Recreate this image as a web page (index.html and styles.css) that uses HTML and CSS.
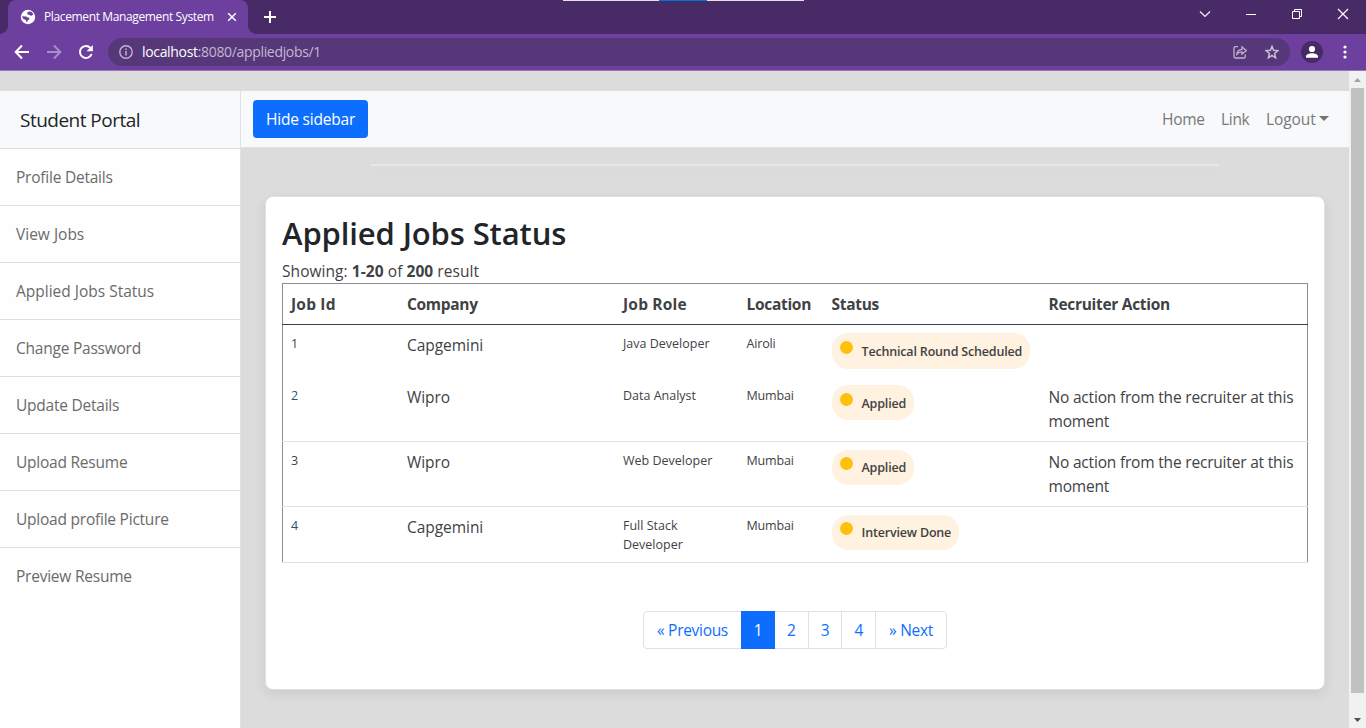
FILE: index.html
```html
<!DOCTYPE html>
<html lang="en">
<head>
<meta charset="utf-8">
<title>Placement Management System</title>
<link rel="stylesheet" href="styles.css">
</head>
<body>
<div class="window">
  <header class="tabstrip">
    <div class="top-marker"><i></i></div>
    <div class="tab-before"></div>
    <div class="tab">
      <svg class="favicon" viewBox="0 0 16 16"><circle cx="8" cy="8" r="7.2" fill="#fff"/><path d="M7.6 3.2c1.400-1.200 3.300-.8 4.400.1l1.400 2.200c-.9.3-1.200 1.300-2.400 1.200-.9 0-1.100-.9-1.900-1-.7-.2-1.300.3-1.500-.4-.2-.7-.7-1.200 0-2.100zM2 7.300l4 .2c.9.1 1 .9 1.800 1.100.8.1 1.700.2 1.600 1.100-.1 1-1.300 1-1.600 1.900-.2.700-.5 1.500-1.300 1.500L5.800 11C4.200 10.600 2.700 10.200 2 7.300z" fill="#6d409f"/></svg>
      <span class="tab-title">Placement Management System</span>
      <svg class="tab-close" viewBox="0 0 10 10"><path d="M1.200 1.200l7.600 7.600M8.800 1.200L1.200 8.800" stroke="#fff" stroke-width="1.500"/></svg>
    </div>
    <div class="tab-after"></div>
    <svg class="new-tab" viewBox="0 0 12 12"><path d="M6 0v12M0 6h12" stroke="#fff" stroke-width="2"/></svg>
    <div class="window-controls">
      <svg width="12" height="12" viewBox="0 0 12 12"><path d="M1 3.500l5 5 5-5" fill="none" stroke="#f4f0f8" stroke-width="1.200"/></svg>
      <svg width="12" height="12" viewBox="0 0 12 12"><path d="M1 6.500h10" stroke="#fff"/></svg>
      <svg width="12" height="12" viewBox="0 0 12 12"><path d="M1.500 3.500h7v7h-7zM3.500 3.500v-2h7v7h-2" fill="none" stroke="#fff"/></svg>
      <svg width="12" height="12" viewBox="0 0 12 12"><path d="M1 1l10 10M11 1L1 11" stroke="#fff" stroke-width="1.200"/></svg>
    </div>
  </header>

  <div class="toolbar">
    <svg class="tool" viewBox="0 0 16 16"><path d="M15 8H2M8 1.500L1.700 8 8 14.500" fill="none" stroke="#fff" stroke-width="2"/></svg>
    <svg class="tool" viewBox="0 0 16 16"><path d="M1 8h13M8 1.500L14.300 8 8 14.500" fill="none" stroke="#aa8dc9" stroke-width="2"/></svg>
    <svg class="tool" viewBox="0 0 16 16"><path d="M13.600 10a6 6 0 1 1-1.200-6.100" fill="none" stroke="#fff" stroke-width="2"/><path d="M14.800 1v6.300H8.500z" fill="#fff"/></svg>
    <div class="omnibox">
      <svg class="info" viewBox="0 0 14 14"><circle cx="7" cy="7" r="6.200" fill="none" stroke="#c3b6d0" stroke-width="1.400"/><path d="M7 6v4.500M7 3.400v1.500" stroke="#c3b6d0" stroke-width="1.500"/></svg>
      <span class="url"><b>localhost</b>:8080/appliedjobs/1</span>
      <svg class="share" viewBox="0 0 14 14"><path d="M5 1.600H2.500Q1 1.600 1 3.100v8.300Q1 13 2.500 13h8.300q1.500 0 1.500-1.600V9.500" fill="none" stroke="#c0b3ce" stroke-width="1.300"/><path d="M3.800 9.300C4.200 6.200 6 4.500 9 4.300V1.800l4.300 3.700L9 9.200V6.900C6.600 6.900 5.200 7.700 3.800 9.300z" fill="none" stroke="#c0b3ce" stroke-width="1.300"/></svg>
      <svg class="star" viewBox="0 0 14 14"><path d="M7 1.400l1.550 3.900 4.400.35-3.350 2.850 1.050 4.300L7 10.500l-3.650 2.300 1.050-4.300-3.350-2.850 4.400-.35z" fill="none" stroke="#c8bdd3" stroke-width="1.500"/></svg>
    </div>
    <svg class="avatar" viewBox="0 0 22 22"><circle cx="11" cy="11" r="11" fill="#472a66"/><circle cx="11" cy="8" r="3.100" fill="#fff"/><path d="M5 16.800v-1.300c0-2 3.500-3.200 6-3.200s6 1.200 6 3.200v1.300z" fill="#fff"/></svg>
    <svg class="dots" viewBox="0 0 4 14"><circle cx="2" cy="2" r="1.600" fill="#fff"/><circle cx="2" cy="7" r="1.600" fill="#fff"/><circle cx="2" cy="12" r="1.600" fill="#fff"/></svg>
  </div>

  <div class="viewport">
    <div class="page">
      <aside class="sidebar">
        <div class="brand">Student Portal</div>
        <nav>
          <a>Profile Details</a><a class="wide">View Jobs</a><a class="wide">Applied Jobs Status</a><a>Change Password</a><a>Update Details</a><a>Upload Resume</a><a>Upload profile Picture</a><a>Preview Resume</a>
        </nav>
      </aside>
      <main>
        <div class="navbar">
          <button class="hide-btn">Hide sidebar</button>
          <span class="nav-home">Home</span><span class="nav-link">Link</span><span class="nav-logout">Logout<i class="caret"></i></span>
        </div>
        <div class="rule"></div>
        <section class="card">
          <h1>Applied Jobs Status</h1>
          <div class="showing">Showing: <b>1-20</b> of <b>200</b> result</div>
          <table>
            <colgroup><col class="c-id"><col class="c-company"><col class="c-role"><col class="c-loc"><col class="c-status"><col></colgroup>
            <thead><tr><th class="wide">Job Id</th><th>Company</th><th class="wide">Job Role</th><th>Location</th><th>Status</th><th>Recruiter Action</th></tr></thead>
            <tbody>
              <tr class="r1"><td class="sm">1</td><td class="company">Capgemini</td><td class="sm">Java Developer</td><td class="sm">Airoli</td><td><span class="badge tall"><i></i>Technical Round Scheduled</span></td><td></td></tr>
              <tr class="r2"><td class="sm link">2</td><td class="company">Wipro</td><td class="sm">Data Analyst</td><td class="sm">Mumbai</td><td><span class="badge"><i></i>Applied</span></td><td class="action">No action from the recruiter at this moment</td></tr>
              <tr class="r3"><td class="sm">3</td><td class="company">Wipro</td><td class="sm">Web Developer</td><td class="sm">Mumbai</td><td><span class="badge"><i></i>Applied</span></td><td class="action">No action from the recruiter at this moment</td></tr>
              <tr class="r4"><td class="sm link">4</td><td class="company">Capgemini</td><td class="sm">Full Stack<br>Developer</td><td class="sm">Mumbai</td><td><span class="badge"><i></i>Interview Done</span></td><td></td></tr>
            </tbody>
          </table>
          <div class="pagination"><a class="prev">« Previous</a><a class="active">1</a><a>2</a><a>3</a><a>4</a><a class="next">» Next</a></div>
        </section>
      </main>
    </div>
    <div class="scrollbar">
      <svg width="7" height="4" viewBox="0 0 7 4"><path d="M0 4h7L3.500 0z" fill="#a3a3a3"/></svg>
      <div class="thumb"></div>
      <svg class="down" width="7" height="4" viewBox="0 0 7 4"><path d="M0 0h7L3.500 4z" fill="#505050"/></svg>
    </div>
  </div>
</div>
</body>
</html>
```
FILE: styles.css
```css
* { box-sizing: border-box; }
html, body { margin: 0; height: 100%; overflow: hidden; }
body { font-family: "Open Sans", "Noto Sans", sans-serif; font-size: 15.5px; line-height: 24px; letter-spacing: -0.3px; color: #3f4244; }
svg { display: block; flex: none; }
.window { width: 1366px; height: 728px; display: flex; flex-direction: column; overflow: hidden; }

.tabstrip { position: relative; height: 34px; flex: none; display: flex; background: #472a66; }
.top-marker { position: absolute; left: 563px; top: 0; width: 241px; height: 1px; background: #e2e2e2; }
.top-marker i { display: block; margin-left: 96px; width: 48px; height: 1px; background: #0078d7; }
.tab-before, .tab-after { width: 8px; }
.tab-before { background: radial-gradient(circle at 0 26px, #472a66 7.500px, transparent 8px), linear-gradient(#472a66 26px, #6d409f 26px); }
.tab-after { background: radial-gradient(circle at 8px 26px, #472a66 7.500px, transparent 8px), linear-gradient(#472a66 26px, #6d409f 26px); }
.tab { width: 240px; height: 34px; background: #6d409f; border-radius: 8px 8px 0 0; display: flex; align-items: center; padding: 0 0 0 12px; color: #fff; }
.favicon { width: 16px; height: 16px; }
.tab-title { width: 176px; margin-left: 8px; margin-right: 7px; font-size: 12px; letter-spacing: -0.37px; white-space: nowrap; }
.tab-close { width: 10px; height: 10px; }
.new-tab { width: 12px; height: 12px; margin: 11px 0 0 8px; }
.window-controls { margin-left: auto; display: flex; gap: 34px; padding: 8px 17px 0 0; }

.toolbar { height: 37px; flex: none; display: flex; align-items: center; background: #6d409f; border-bottom: 1px solid #9878bb; padding-left: 14px; }
.tool { width: 16px; height: 16px; margin-right: 16px; }
.omnibox { width: 1182px; height: 28px; margin-left: -2px; border-radius: 14px; background: #56377a; display: flex; align-items: center; padding: 0 11px; }
.info { width: 14px; height: 14px; }
.url { margin-left: 9px; font-size: 14px; letter-spacing: -0.33px; color: #c4b8d1; }
.url b { font-weight: 400; color: #fff; }
.share { width: 14px; height: 14px; margin-left: auto; }
.star { width: 14px; height: 14px; margin-left: 18px; }
.avatar { width: 22px; height: 22px; margin-left: 11px; }
.dots { width: 4px; height: 14px; margin-left: 20px; }

.viewport { flex: 1; min-height: 0; display: flex; }
.page { width: 1349px; padding-top: 20px; background: #dcdcdc; display: flex; }
.sidebar { width: 241px; flex: none; background: #fff; border-right: 1px solid #dee2e6; }
.brand { height: 58px; padding: 17px 20px 0; background: #f8f9fa; border-bottom: 1px solid #dcdfe2; font-size: 19px; letter-spacing: -0.52px; color: #212529; }
nav a { display: block; height: 57px; padding: 16px 16px 0; border-bottom: 1px solid #dedfe0; color: #6a6b6b; background: #fefefe; letter-spacing: -0.23px; }
nav a.wide { letter-spacing: 0; }
nav a:last-child { border-bottom: 0; }
main { width: 1108px; flex: none; }
.navbar { height: 57px; display: flex; align-items: center; padding: 0 20px 0 12px; background: #f8f9fa; border-bottom: 1px solid #dee2e6; color: #777879; }
.hide-btn { width: 115px; height: 38px; margin-right: auto; border: 0; border-radius: 4px; background: #0d6efd; color: #fff; font: inherit; letter-spacing: -0.2px; white-space: nowrap; }
.nav-home { width: 59px; }
.nav-link { width: 45px; }
.nav-logout { width: 63px; display: flex; align-items: center; white-space: nowrap; letter-spacing: -0.1px; }
.caret { margin: -2px 0 0 auto; border: 5px solid transparent; border-top-color: #717273; border-bottom: 0; }
.rule { width: 848px; height: 2px; margin: 16px 0 0 130px; background: #e7e7ea; box-shadow: 0 4px 10px rgba(0,0,0,.03); }
.card { width: 1060px; height: 494px; margin: 30px 0 0 24px; padding: 14px 16px 0; background: #fff; border: 1px solid #dfe0e5; border-radius: 8px; box-shadow: 0 4px 12px rgba(0,0,0,.08); }
h1 { margin: 0; height: 48px; font-size: 31px; line-height: 44px; font-weight: 600; letter-spacing: -0.12px; color: #212529; }
.showing { height: 24px; letter-spacing: 0.06px; white-space: nowrap; }
table { width: 1026px; border-collapse: collapse; table-layout: fixed; border: 1px solid #8b8d8f; border-bottom-color: #dee2e6; }
th, td { padding: 8px; text-align: left; vertical-align: top; }
th { font-weight: 700; letter-spacing: -0.3px; padding-bottom: 7px; white-space: nowrap; }
th.wide { letter-spacing: 0.2px; }
th:nth-child(n+2):nth-child(-n+3), td:nth-child(n+2):nth-child(-n+3) { padding-left: 8.500px; }
thead tr { height: 41px; border-bottom: 1px solid #3f4244; }
.c-id { width: 116px; }
.c-company { width: 216px; }
.c-role { width: 124px; }
.c-loc { width: 85px; }
.c-status { width: 217px; }
.r1 { height: 52px; }
.r2 { height: 64px; }
.r3 { height: 65px; }
.r2 td { padding-bottom: 7px; }
.r2, .r3 { border-bottom: 1px solid #dee2e6; }
.r4 { height: 56px; }
.company { letter-spacing: -0.05px; }
.action { letter-spacing: -0.19px; }
.sm { padding-top: 9px; padding-bottom: 7px; font-size: 12.500px; line-height: 19px; letter-spacing: 0; }
td:nth-child(4).sm { letter-spacing: -0.15px; }
.link { color: #31506f; }
.badge { display: inline-flex; align-items: center; height: 35px; padding: 2px 8px 0 8px; border-radius: 16px; background: #fff2e0; font-size: 12.500px; font-weight: 600; letter-spacing: -0.17px; white-space: nowrap; vertical-align: top; }
.badge.tall { height: 36px; }
.badge i { width: 13px; height: 13px; margin: -9px 9px 0 0; border-radius: 50%; background: #ffc107; }
.pagination { width: 304px; height: 38px; margin: 48px auto 0; display: flex; border: 1px solid #dee2e6; border-radius: 4px; color: #0d6efd; line-height: 36px; text-align: center; white-space: nowrap; }
.pagination a { flex: 1; border-right: 1px solid #dee2e6; }
.pagination .prev { flex: 0 0 97px; border: 0; }
.pagination .active { flex: 0 0 34px; height: 38px; margin-top: -1px; line-height: 38px; background: #0d6efd; color: #fff; border: 0; }
.pagination .next { flex: 0 0 70px; border: 0; }

.scrollbar { width: 17px; background: #f1f1f1; display: flex; flex-direction: column; align-items: center; padding: 7px 0 6px; }
.thumb { width: 13px; height: 605px; margin-top: 6px; background: #c1c1c1; }
.down { margin-top: auto; }
```
